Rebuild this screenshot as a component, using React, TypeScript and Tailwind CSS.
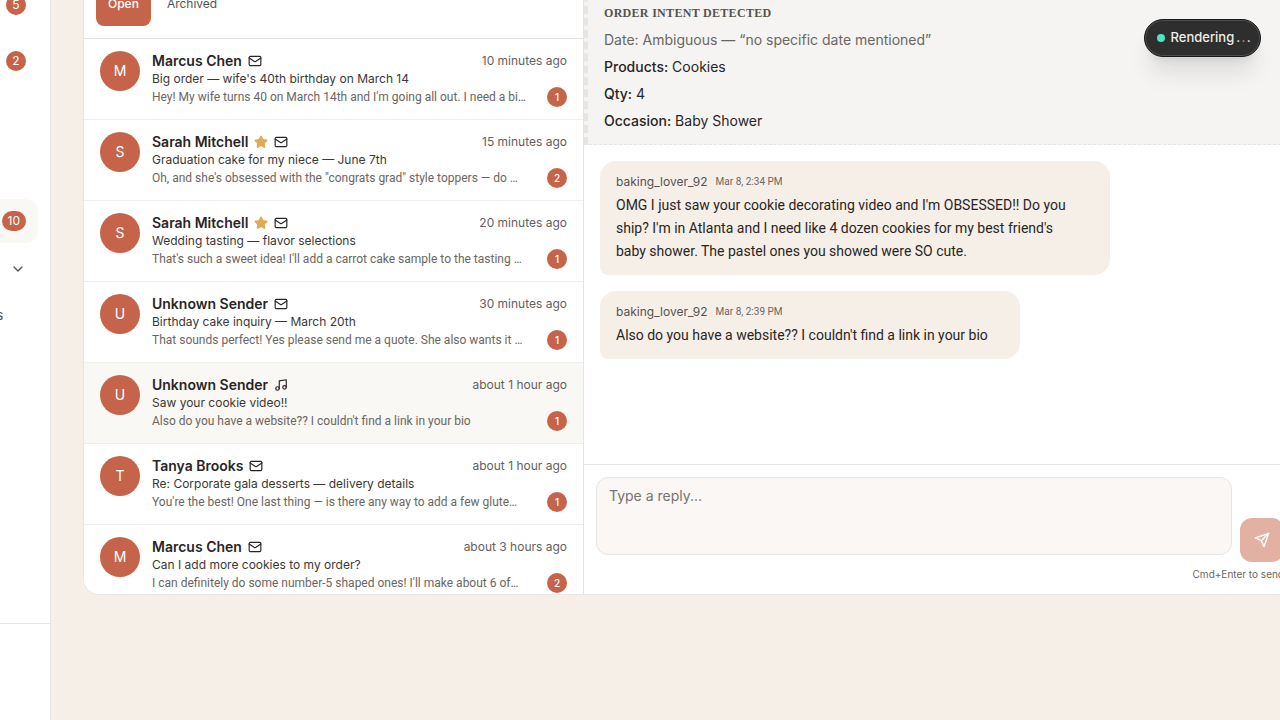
import React, { useState } from 'react';
import { ChevronDown, Mail, Music, Star } from 'lucide-react';

interface Conversation {
    id: number;
    name: string;
    starred?: boolean;
    channel: 'email' | 'tiktok';
    time: string;
    subject: string;
    preview: string;
    unread: number;
}

interface Message {
    id: number;
    author: string;
    time: string;
    body: string;
}

const conversations: Conversation[] = [
    { id: 1, name: 'Marcus Chen', channel: 'email', time: '10 minutes ago', subject: "Big order — wife's 40th birthday on March 14", preview: "Hey! My wife turns 40 on March 14th and I'm going all out. I need a bi…", unread: 1 },
    { id: 2, name: 'Sarah Mitchell', starred: true, channel: 'email', time: '15 minutes ago', subject: 'Graduation cake for my niece — June 7th', preview: 'Oh, and she\'s obsessed with the "congrats grad" style toppers — do …', unread: 2 },
    { id: 3, name: 'Sarah Mitchell', starred: true, channel: 'email', time: '20 minutes ago', subject: 'Wedding tasting — flavor selections', preview: "That's such a sweet idea! I'll add a carrot cake sample to the tasting …", unread: 1 },
    { id: 4, name: 'Unknown Sender', channel: 'email', time: '30 minutes ago', subject: 'Birthday cake inquiry — March 20th', preview: 'That sounds perfect! Yes please send me a quote. She also wants it …', unread: 1 },
    { id: 5, name: 'Unknown Sender', channel: 'tiktok', time: 'about 1 hour ago', subject: 'Saw your cookie video!!', preview: "Also do you have a website?? I couldn't find a link in your bio", unread: 1 },
    { id: 6, name: 'Tanya Brooks', channel: 'email', time: 'about 1 hour ago', subject: 'Re: Corporate gala desserts — delivery details', preview: "You're the best! One last thing — is there any way to add a few glute…", unread: 1 },
    { id: 7, name: 'Marcus Chen', channel: 'email', time: 'about 3 hours ago', subject: 'Can I add more cookies to my order?', preview: "I can definitely do some number-5 shaped ones! I'll make about 6 of…", unread: 2 },
];

const messages: Message[] = [
    { id: 1, author: 'baking_lover_92', time: 'Mar 8, 2:34 PM', body: "OMG I just saw your cookie decorating video and I'm OBSESSED!! Do you ship? I'm in Atlanta and I need like 4 dozen cookies for my best friend's baby shower. The pastel ones you showed were SO cute." },
    { id: 2, author: 'baking_lover_92', time: 'Mar 8, 2:39 PM', body: "Also do you have a website?? I couldn't find a link in your bio" },
];

function Sidebar() {
    const badge = 'flex h-5 min-w-5 items-center justify-center rounded-full bg-[#c5644a] px-1.5 text-xs text-white';

    return (
        <aside className="flex w-[51px] shrink-0 flex-col overflow-hidden border-r border-[#e7e5e4] bg-white">
            {/* scrolled a little, so the first link is cut by the window */}
            <nav className="-mt-[17px] flex flex-1 flex-col pr-3">
                <a href="#orders" className="flex h-11 items-center justify-end pr-3"><span className={badge}>5</span></a>
                <a href="#quotes" className="mt-3 flex h-11 items-center justify-end pr-3"><span className={badge}>2</span></a>
                <a href="#inbox" className="mt-[116px] flex h-11 items-center justify-end rounded-r-xl bg-[#faf8f5] pr-3"><span className={badge}>10</span></a>
                <button aria-label="Expand section" className="mt-1 flex h-11 items-center justify-end pr-3 text-[#57534e]">
                    <ChevronDown size={16} />
                </button>
                <a href="#settings" className="flex h-12 items-center text-sm text-[#57534e]"><span className="-ml-1">s</span></a>
            </nav>
            <div className="h-24 border-t border-[#e7e5e4] box-content" />
        </aside>
    );
}

function ConversationRow({ item, active, onSelect }: { item: Conversation; active: boolean; onSelect: () => void }) {
    return (
        <li className={`border-b border-[#f0efee] ${active ? 'bg-[#faf8f5]' : 'bg-white'}`}>
            <button onClick={onSelect} className="flex w-full gap-3 px-4 py-3 text-left">
                <span className="flex size-10 shrink-0 items-center justify-center rounded-full bg-[#c5644a] text-sm text-white">
                    {item.name[0]}
                </span>
                <span className="flex min-w-0 flex-1 flex-col">
                    <span className="flex h-5 items-center gap-1.5">
                        <span className="truncate text-sm font-semibold text-[#292524]">{item.name}</span>
                        {item.starred && <Star size={14} className="shrink-0 fill-[#e0a958] text-[#e0a958]" />}
                        {item.channel === 'email' ? <Mail size={14} className="shrink-0 text-[#292524]" /> : <Music size={14} className="shrink-0 text-[#292524]" />}
                        <span className="ml-auto shrink-0 text-xs text-[#65605c]">{item.time}</span>
                    </span>
                    <span className="truncate text-xs leading-4 text-[#3b3734]">{item.subject}</span>
                    <span className="flex h-5 items-center justify-between gap-2">
                        <span className="truncate font-[Roboto,sans-serif] text-xs text-[#6b6662]">{item.preview}</span>
                        <span className="flex size-5 shrink-0 items-center justify-center rounded-full bg-[#c5644a] text-[10px] font-medium text-white">{item.unread}</span>
                    </span>
                </span>
            </button>
        </li>
    );
}

function OrderIntent() {
    return (
        <section className="flex shrink-0 flex-col gap-1 border-b border-l-4 border-dashed border-[#e7e5e4] bg-[#f5f4f2] px-4 pt-[35px] pb-3 text-sm leading-[23px] text-[#292524]">
            <h3 className="mb-[3px] font-['Liberation_Serif',serif] text-xs leading-4 font-bold tracking-wide text-[#57534e] uppercase">Order intent detected</h3>
            <p className="text-[#6b6662]">Date: Ambiguous — “no specific date mentioned”</p>
            <p><span className="font-medium">Products:</span> Cookies</p>
            <p><span className="font-medium">Qty:</span> 4</p>
            <p><span className="font-medium">Occasion:</span> Baby Shower</p>
        </section>
    );
}

function SendIcon() {
    return (
        <svg width="16" height="16" viewBox="0 0 24 24" fill="none" stroke="currentColor" strokeWidth="2" strokeLinecap="round" strokeLinejoin="round" aria-hidden="true">
            <path d="m22 2-7 20-4-9-9-4Z" />
            <path d="M22 2 11 13" />
        </svg>
    );
}

function ReplyBox() {
    const [reply, setReply] = useState('');

    return (
        <form className="shrink-0 border-t border-[#e7e5e4] p-3" onSubmit={(e) => e.preventDefault()}>
            <div className="flex items-end gap-2">
                <textarea
                    aria-label="Reply"
                    placeholder="Type a reply..."
                    value={reply}
                    onChange={(e) => setReply(e.target.value)}
                    className="mb-[7px] h-[78px] flex-1 resize-none rounded-xl border border-[#e7e5e4] bg-[#faf7f4] px-3 py-2 text-sm text-[#292524] placeholder:text-[#78736f]"
                />
                <button aria-label="Send" className="flex size-11 items-center justify-center rounded-xl bg-[#e2b1a4] text-white">
                    <SendIcon />
                </button>
            </div>
            <p className="mt-1 text-right text-[10px] leading-4 text-[#6b6662]">Cmd+Enter to send</p>
        </form>
    );
}

export default function App() {
    const [selected, setSelected] = useState(5);

    return (
        <div className="relative flex h-screen overflow-hidden bg-[#f6efe8] font-[Inter,sans-serif]">
            <Sidebar />
            <main className="flex min-w-0 flex-1 pb-[125px] pl-8">
                <div className="-mt-[31px] -mr-[17px] flex flex-1 overflow-hidden rounded-2xl border border-[#e7e5e4] bg-white">
                    <div className="flex w-[500px] shrink-0 flex-col border-r border-[#e7e5e4]">
                        <div className="flex shrink-0 gap-1 border-b border-[#e7e5e4] p-3 text-xs">
                            <button className="h-11 rounded-lg bg-[#c5644a] px-3 font-medium text-white">Open</button>
                            <button className="h-11 rounded-lg px-3 text-[#57534e]">Archived</button>
                        </div>
                        <ul className="min-h-0 flex-1 overflow-hidden">
                            {conversations.map((item) => (
                                <ConversationRow key={item.id} item={item} active={item.id === selected} onSelect={() => setSelected(item.id)} />
                            ))}
                        </ul>
                    </div>
                    <div className="flex min-w-0 flex-1 flex-col">
                        <OrderIntent />
                        <div className="flex min-h-0 flex-1 flex-col items-start gap-4 p-4">
                            {messages.map((message) => (
                                <article key={message.id} className="max-w-[75%] rounded-2xl rounded-bl-lg bg-[#f6efe8] py-3 pr-8 pl-4">
                                    <header className="mb-1 flex h-[17px] items-center gap-2">
                                        <span className="text-xs text-[#57534e]">{message.author}</span>
                                        <time className="font-[Roboto,sans-serif] text-[10px] text-[#6b6662]">{message.time}</time>
                                    </header>
                                    <p className="font-[Roboto,sans-serif] text-sm leading-[23px] text-[#292524]">{message.body}</p>
                                </article>
                            ))}
                        </div>
                        <ReplyBox />
                    </div>
                </div>
            </main>
            {/* render status */}
            <div role="status" className="absolute top-[19px] right-[19px] flex h-[38px] items-center gap-1.5 rounded-full border border-[#171717] bg-[#2e2e2e] px-3 pr-2 text-[13px] font-medium text-[#ededed] shadow-xl inset-ring inset-ring-white/15">
                <span className="size-2 rounded-full bg-[#50e3c2]" />
                <span>Rendering</span>
                <span className="-ml-1 tracking-widest">.<span className="text-white/50">.</span>.</span>
            </div>
        </div>
    );
}
